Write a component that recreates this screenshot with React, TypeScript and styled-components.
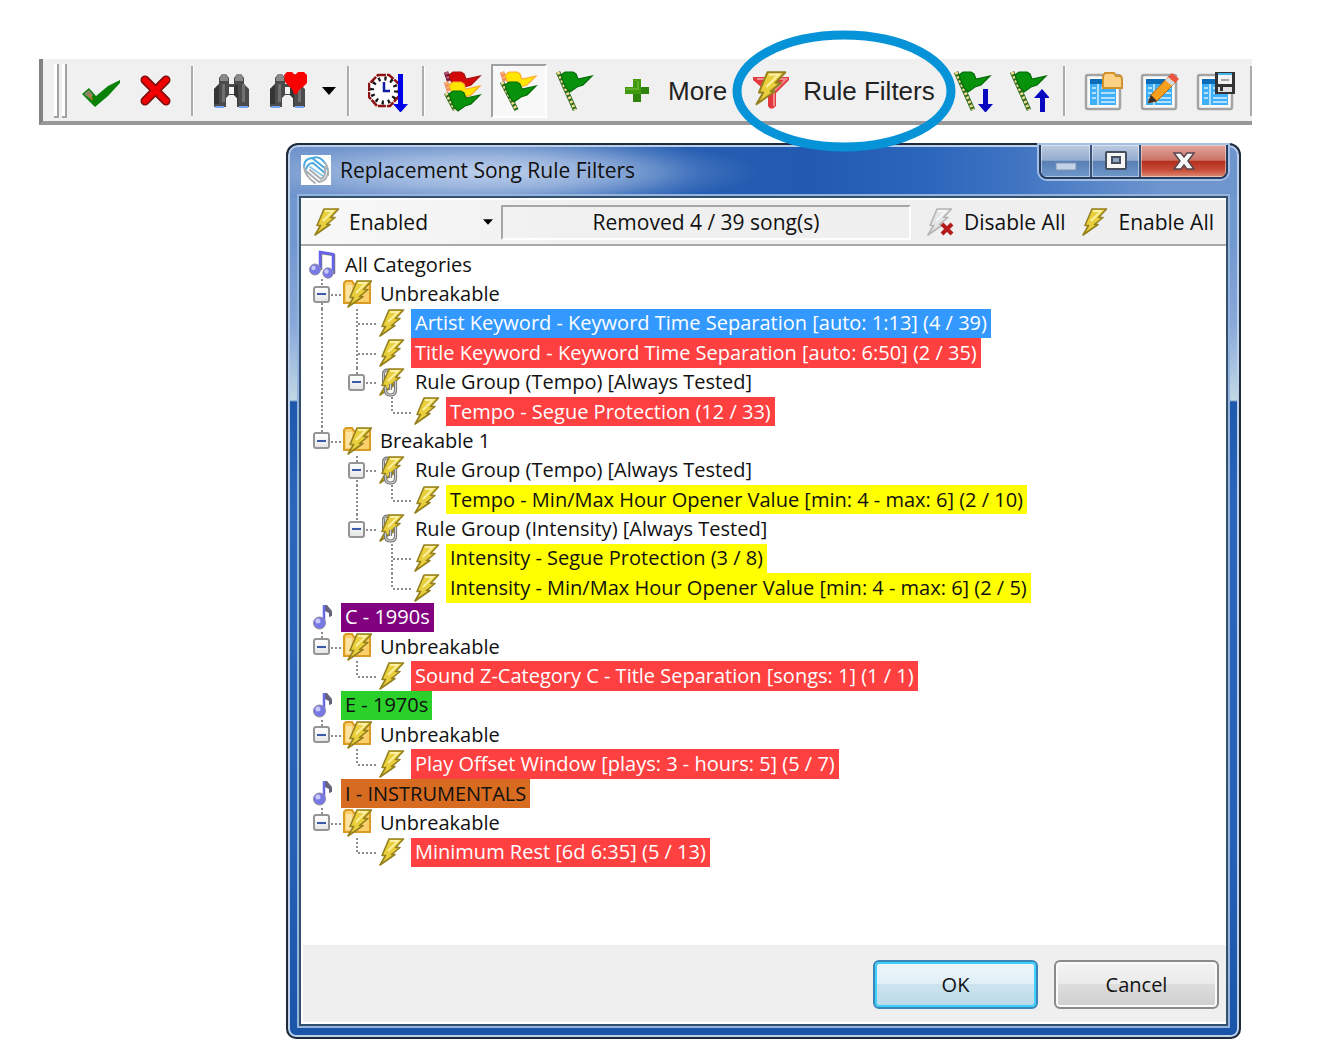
import React from "react";
import styled, { createGlobalStyle, css } from "styled-components";

const GlobalStyle = createGlobalStyle`
  *, *::before, *::after { box-sizing: border-box; }
  body { margin: 0; background: #fff; }
  button, select { font: inherit; color: inherit; margin: 0; padding: 0; border: 0; background: none; }
`;

const Page = styled.main`
  display: flex;
  flex-direction: column;
  gap: 18px;
  padding: 59px 84px 5px 39px;
  font-family: "Open Sans", "Noto Sans", sans-serif;
  font-size: 20px;
  line-height: 28px;
  color: #111;
`;

/* ---------- main toolbar ---------- */

const Toolbar = styled.div`
  display: flex;
  align-items: center;
  height: 66px;
  padding-top: 2px;
  background: #f0f0f0;
  border-left: 4px solid #838383;
  border-bottom: 4px solid #989898;
  font-family: "Liberation Sans", Arial, sans-serif;
  font-size: 26px;
  line-height: 32px;
  color: #222;
  white-space: nowrap;
`;

const Grip = styled.div`
  display: flex;
  gap: 3px;
  height: 54px;
  margin: 0 6px 0 11px;
`;

const GripBar = styled.span`
  width: 5px;
  border: solid #a2a2a2;
  border-width: 0 2px 2px 0;
  background: #fff;
`;

const ToolButton = styled.button<{ $pressed?: boolean }>`
  display: grid;
  place-items: center;
  flex: none;
  width: 56px;
  height: 54px;
  border: 2px solid transparent;
  ${(p) =>
    p.$pressed &&
    css`
      background: #f8f8f8;
      border-color: #a0a0a0 #fff #fff #a0a0a0;
    `}
`;

const CaretButton = styled.button`
  display: grid;
  place-items: center;
  flex: none;
  width: 25px;
  height: 54px;
`;

const TextButton = styled.button<{ $pad: string }>`
  position: relative;
  display: flex;
  align-items: center;
  flex: none;
  gap: 11px;
  height: 54px;
  padding: ${(p) => p.$pad};
`;

const Separator = styled.span`
  flex: none;
  width: 3px;
  height: 50px;
  margin: 0 10px 0 6px;
  border-left: 2px solid #adadad;
  border-right: 1px solid #fff;
  &:last-child {
    margin-right: 0;
  }
`;

const Highlight = styled.svg`
  position: absolute;
  left: 50%;
  top: 50%;
  transform: translate(-50%, -50%);
  z-index: 2;
  pointer-events: none;
`;

/* ---------- dialog ---------- */

const Dialog = styled.section`
  margin: 0 11px 0 247px;
  padding: 0 11px 11px;
  border: 2px solid #1f2a3c;
  border-radius: 12px 12px 10px 10px;
  box-shadow: inset 0 0 0 2px #bdd0ea;
  background:
    radial-gradient(ellipse 270px 36px at 200px 27px, rgba(205, 220, 242, 0.85), rgba(190, 208, 236, 0.6) 45%, rgba(190, 208, 236, 0.15) 80%, transparent) no-repeat 0 0 / 100% 53px,
    linear-gradient(90deg, #6d92cb, #5a84c4 25%, #265eb2 42%, #215ab0 55%, #2d67bc 68%, #3e73c1 76%, #6e95ce 92%) no-repeat 0 0 / 100% 53px,
    linear-gradient(#7298d0, #7298d0 100px, #8aa8da 180px, #c0d8e4 255px, #1d58ac 257px, #2b66bd 360px, #2560b6 700px, #1b55aa);
`;

const TitleBar = styled.header`
  display: flex;
  align-items: flex-start;
  height: 51px;
  padding-left: 2px;
`;

const Title = styled.h1`
  flex: 1;
  margin: 11px 0 0 9px;
  font-size: 21px;
  line-height: 28px;
  font-weight: 400;
`;

const Logo = styled.svg`
  margin-top: 10px;
  background: #fff;
`;

const CaptionGroup = styled.div`
  display: flex;
  height: 34px;
  border: 2px solid #243c60;
  border-top: 0;
  border-radius: 0 0 8px 8px;
  box-shadow: 0 0 0 2px #a3bfe4;
  overflow: hidden;
`;

const CaptionButton = styled.button<{ $close?: boolean }>`
  display: grid;
  place-items: center;
  width: ${(p) => (p.$close ? 87 : 49)}px;
  box-shadow: inset 0 0 0 1px rgba(255, 255, 255, 0.45);
  background: ${(p) =>
    p.$close
      ? "linear-gradient(#dfa79c, #cc7265 48%, #b42d1c 50%, #c8503c 80%, #dd8e78)"
      : "linear-gradient(#bccbe0, #94accf 48%, #587fb4 50%, #6f97ca)"};
  & + & {
    border-left: 2px solid #3b5278;
  }
`;

const Client = styled.div`
  border: 2px solid #34506f;
  box-shadow: 0 0 0 2px #94b4de;
  background: #fff;
`;

const FilterBar = styled.div`
  display: flex;
  align-items: center;
  height: 48px;
  padding: 0 12px;
  border-top: 2px solid #fff;
  border-bottom: 2px solid #a9a9a9;
  background: linear-gradient(90deg, #f8f8f8, #f0f0f0 30%, #efefef);
  font-size: 21px;
  white-space: nowrap;
`;

const ModeField = styled.label`
  display: flex;
  align-items: center;
  gap: 8px;
  width: 188px;
  padding-right: 8px;
`;

const ModeSelect = styled.select`
  flex: 1;
  min-width: 0;
  height: 28px;
  appearance: none;
`;

const Status = styled.output`
  flex: 1;
  height: 35px;
  border: 2px solid;
  border-color: #a6a6a6 #fff #fff #a6a6a6;
  line-height: 31px;
  text-align: center;
`;

const FilterAction = styled.button`
  display: flex;
  align-items: center;
  gap: 10px;
  margin-left: 15px;
`;

/* ---------- tree ---------- */

const Tree = styled.ul`
  display: grid;
  grid-auto-rows: 1fr;
  min-height: 699px;
  margin: 0;
  padding: 4px 0 78px 3px;
  list-style: none;
`;

const Row = styled.li`
  display: flex;
  align-items: stretch;
  white-space: nowrap;
`;

const dots = "#8c8c8c";

const Cell = styled.span<{ $line?: "full" | "half" | "none"; $arm?: boolean }>`
  position: relative;
  display: grid;
  place-items: center;
  flex: none;
  width: 35px;
  &::before {
    content: "";
    position: absolute;
    left: 17px;
    top: 0;
    width: 2px;
    height: ${(p) => (p.$line === "full" ? "100%" : p.$line === "half" ? "50%" : "0")};
    background: repeating-linear-gradient(${dots} 0 2px, transparent 2px 4px);
  }
  &::after {
    content: "";
    position: absolute;
    left: 19px;
    top: 50%;
    width: ${(p) => (p.$arm ? "19px" : "0")};
    height: 2px;
    background: repeating-linear-gradient(90deg, ${dots} 0 2px, transparent 2px 4px);
  }
`;

const Expander = styled.button`
  position: relative;
  z-index: 1;
  display: grid;
  place-items: center;
  width: 17px;
  height: 17px;
  border: 2px solid #959595;
  border-radius: 3px;
  background: linear-gradient(#fff, #e6e6e6);
  &::before {
    content: "";
    width: 9px;
    height: 2px;
    background: #3c5aa8;
  }
`;

const IconCell = styled.span`
  position: relative;
  z-index: 1;
  display: grid;
  place-items: center;
  flex: none;
  width: 35px;
  height: 29px;
`;

const tones = {
  plain: "background: transparent; color: #111;",
  selected: "background: #3399ff; color: #fff;",
  red: "background: #ff4040; color: #fff;",
  yellow: "background: #ffff00; color: #111;",
  purple: "background: #800080; color: #fff;",
  green: "background: #2bd02b; color: #111;",
  orange: "background: #d76b20; color: #111;",
};

const Label = styled.span<{ $tone: keyof typeof tones }>`
  display: flex;
  align-items: center;
  margin-left: 2px;
  padding: 0 4px;
  ${(p) => tones[p.$tone]}
`;

const Footer = styled.footer`
  display: flex;
  justify-content: flex-end;
  gap: 16px;
  padding: 15px 7px 13px;
  border: solid #fff;
  border-width: 0 0 2px 2px;
  background: #efefef;
`;

const DialogButton = styled.button<{ $primary?: boolean }>`
  width: 165px;
  height: 49px;
  border: 2px solid ${(p) => (p.$primary ? "#3a86b8" : "#8a8a8a")};
  border-radius: 6px;
  box-shadow: inset 0 0 0 2px ${(p) => (p.$primary ? "#3fd0fb" : "#fafafa")};
  background: ${(p) =>
    p.$primary
      ? "linear-gradient(#eef6fb, #e0eff7 48%, #cde4ef 50%, #b9d9e8)"
      : "linear-gradient(#f3f3f3, #ebebeb 48%, #dddddd 50%, #cecece)"};
`;

/* ---------- icons ---------- */

const Glyph = ({ children }: { children: React.ReactNode }) => (
  <svg width="40" height="42" viewBox="0 0 40 42" aria-hidden="true">
    {children}
  </svg>
);

const Caret = ({ size = 14 }: { size?: number }) => (
  <svg width={size} height={size / 2 + 1} viewBox="0 0 14 8" aria-hidden="true">
    <path d="M0 0H14L7 8Z" fill="#000" />
  </svg>
);

const CheckGlyph = () => (
  <Glyph>
    <path d="M1 24L8 18L15 26L27 16L39 10V13L27 26L14 37Z" fill="#0a820a" />
    <path d="M3 24L8 20L12 25L9 29Z" fill="#8a8468" />
    <path d="M7 25L10 26L11 30" stroke="#c07a30" strokeWidth="1.500" fill="none" />
  </Glyph>
);

const CrossGlyph = () => (
  <Glyph>
    <path d="M8 10L29 31M29 10L8 31" stroke="#7c0d0d" strokeWidth="9" strokeLinecap="round" />
    <path d="M8 10L29 31M29 10L8 31" stroke="#f00000" strokeWidth="6" strokeLinecap="round" />
  </Glyph>
);

const BinocularShape = () => (
  <>
    <path d="M2 19L7 14V8L10 4H14L17 8V14H22V8L25 4H29L32 8V14L37 19V37H25V28L22 25H17L14 28V37H2Z" fill="#4b4b4b" />
    <path d="M2 19L7 14V34H2ZM22 16L26 14V34L25 35V28L22 25Z" fill="#343434" />
    <path d="M10 14H13V32H10ZM30 14H33V32H30Z" fill="#707070" />
    <path d="M8 8L10 4H14L16 8V11H8ZM23 8L25 4H29L31 8V11H23Z" fill="#8a8a8a" />
    <rect x="17" y="17" width="5" height="7" fill="#f4f4f4" />
    <path d="M3 36H12V38H3ZM27 36H36V38H27Z" fill="#79a4f5" />
  </>
);

const HeartShape = () => (
  <path d="M16 5L19 2H24L27 5L30 2H36L39 5V13L35 17L31 20L29 24H26L24 19L20 15L17 12Z" fill="#fb0000" />
);

const ClockGlyph = () => (
  <Glyph>
    <path d="M10 5H21L31 14V26L22 36H9L1 27V14Z" fill="#fff" stroke="#8f1111" strokeWidth="2.500" strokeDasharray="8 1" />
    <circle cx="16" cy="20.500" r="12" fill="none" stroke="#161616" strokeWidth="4" strokeDasharray="2.300 3.980" />
    <path d="M16 12V21H22" stroke="#111ea0" strokeWidth="2.500" fill="none" />
    <path d="M30 4H35V34H40L33 42H32L25 34H30Z" fill="#0000e6" />
  </Glyph>
);

const FlagBody = ({ fill, edge, y = 0 }: { fill: string; edge: string; y?: number }) => (
  <path
    transform={`translate(0 ${y})`}
    d="M6 5L10 2H18L21 4L23 9L37 6L33 10L28 15L22 17L15 22L11 18L8 11Z"
    fill={fill}
    stroke={edge}
    strokeWidth="1.200"
  />
);

const Pole = ({ from = "3 3", to = "20 39", a = "#f2dc94", b = "#2a6a1c" }) => (
  <>
    <path d={`M${from}L${to}`} stroke={b} strokeWidth="4.500" />
    <path d={`M${from}L${to}`} stroke={a} strokeWidth="3" strokeDasharray="2.500 2" />
  </>
);

const GreenFlag = ({ y = 0 }: { y?: number }) => (
  <>
    <Pole from={`3 ${2 + y}`} to={`${20 - y / 4} 40`} />
    <FlagBody fill="#06930b" edge="#066a08" y={y} />
  </>
);

const FlagStackGlyph = () => (
  <Glyph>
    <Pole from="3 2" to="6 11" a="#b06080" b="#7c1030" />
    <FlagBody fill="#d40808" edge="#a81010" />
    <Pole from="3 12" to="6 21" a="#f7b36c" b="#ef8860" />
    <FlagBody fill="#ffe600" edge="#ffab30" y={10} />
    <Pole from="3 23" to="12 40" />
    <FlagBody fill="#06930b" edge="#066a08" y={19} />
  </Glyph>
);

const FlagPairGlyph = () => (
  <Glyph>
    <Pole from="3 2" to="6 11" a="#f7b36c" b="#ef8860" />
    <FlagBody fill="#ffe600" edge="#ffab30" />
    <GreenFlag y={10} />
  </Glyph>
);

const PlusGlyph = () => (
  <Glyph>
    <path d="M16 9H24V17H32V24H24V32H16V24H8V17H16Z" fill="#3f9a10" />
    <path d="M16 24H24V32H16ZM24 17H32V24H24Z" fill="#2f840c" />
    <path d="M17 10H20V18H9V20H22V11H17Z" fill="#5cae28" />
  </Glyph>
);

const boltPath = "M11 1H25.500L17.500 9.500H22L13.500 16.500H17L2 27L7.500 17.500H4Z";

const BoltShape = ({ muted = false }: { muted?: boolean }) => (
  <>
    <path d={boltPath} fill={muted ? "#e4e4e4" : "#e9cf3e"} stroke={muted ? "#b5b5b5" : "#94801d"} strokeWidth="1.600" strokeLinejoin="round" />
    <path d="M12 3H20L10 13" stroke={muted ? "#f6f6f6" : "#fbf0a4"} strokeWidth="1.800" fill="none" />
  </>
);

const Bolt = ({ off = false }: { off?: boolean }) => (
  <svg width="28" height="28" viewBox="0 0 28 28" aria-hidden="true">
    <BoltShape muted={off} />
    {off && <path d="M16 16L26 26M26 16L16 26" stroke="#b51c1c" strokeWidth="4" />}
  </svg>
);

const FilterGlyph = () => (
  <Glyph>
    <path d="M1 7H37V10L24 23V36L21 38.500H18L16 36V23L1 10Z" fill="#e2383f" />
    <path d="M5 9H34L22 21V36" fill="none" stroke="#f08a8d" strokeWidth="2" />
    <g transform="translate(2 1) scale(1.230)">
      <BoltShape />
    </g>
  </Glyph>
);

const FlagMoveGlyph = ({ up = false }: { up?: boolean }) => (
  <Glyph>
    <GreenFlag />
    <path d={up ? "M33 19L41 28H36V42H31V28H25Z" : "M30 19H35V34H40L33 42H32L25 34H30Z"} fill="#0808c0" />
  </Glyph>
);

const TableGlyph = ({ children }: { children: React.ReactNode }) => (
  <Glyph>
    <rect x="2" y="5" width="34" height="34" rx="2" fill="#fafafa" stroke="#a3a3a3" strokeWidth="2.500" />
    <rect x="6" y="9" width="26" height="26" fill="#3fb0f8" />
    <rect x="6" y="9" width="26" height="5" fill="#0b6db8" />
    <path d="M14 14V35M8 18H12M17 18H31M8 23H12M17 23H31M8 28H12M17 28H31M17 32H31" stroke="#d6efff" strokeWidth="1.500" />
    {children}
  </Glyph>
);

const FolderCorner = () => (
  <path d="M19 6L21 3H30L32 6H37L38 9V18H19Z" fill="#fbd184" stroke="#d3922b" strokeWidth="2" />
);

const PencilCorner = () => (
  <>
    <path d="M8 33L11 25L29 6L36 12L17 31Z" fill="#f6a01e" stroke="#a8681a" />
    <path d="M28 7L32 3L39 9L35 13Z" fill="#ee5540" />
    <path d="M25 10L28 7L35 13L32 16Z" fill="#d5d9dc" />
    <path d="M8 33L11 25L17 31Z" fill="#3b2f2a" />
  </>
);

const DiskCorner = () => (
  <>
    <rect x="19" y="2" width="20" height="22" fill="#333" />
    <rect x="22" y="3" width="14" height="2" fill="#43b6ea" />
    <rect x="22" y="5" width="14" height="9" fill="#f2f2f2" />
    <rect x="22" y="17" width="14" height="5" fill="#e1e1e1" />
    <rect x="24" y="17" width="3" height="4" fill="#333" />
    <path d="M25 10H33" stroke="#8a8a8a" strokeWidth="1.500" />
  </>
);

const FolderIcon = () => (
  <svg width="30" height="29" viewBox="0 0 30 29" aria-hidden="true">
    <path d="M2 4L4 2H10L12 5H28V24H2Z" fill="#fbcf6b" stroke="#d99b22" strokeWidth="2" />
    <path d="M4 6H10V22H4Z" fill="#fde3a0" />
    <g transform="translate(4 1)">
      <BoltShape />
    </g>
  </svg>
);

const GroupIcon = () => (
  <svg width="28" height="29" viewBox="0 0 28 29" aria-hidden="true">
    <path d="M5.500 18V6Q5.500 2 9.500 2H11" fill="none" stroke="#777" strokeWidth="3" />
    <path d="M5.500 18V6Q5.500 2 9.500 2H11" fill="none" stroke="#c5c5c5" strokeWidth="1" />
    <BoltShape />
    <path d="M17.500 13V22Q17.500 27 12.500 27T7.500 22V19M12.500 16V22" fill="none" stroke="#747474" strokeWidth="3.200" />
    <path d="M17.500 13V22Q17.500 27 12.500 27T7.500 22V19M12.500 16V22" fill="none" stroke="#cfcfcf" strokeWidth="1.200" />
  </svg>
);

const NoteIcon = () => (
  <svg width="24" height="28" viewBox="0 0 24 28" aria-hidden="true">
    <path d="M14 20V2H17L22 8V13L19 14V10L15 8" fill="#63637c" />
    <path d="M14 20V2" stroke="#6a6ae2" strokeWidth="2.500" />
    <circle cx="9.500" cy="20" r="6" fill="#7878e6" stroke="#8d8d9c" />
    <circle cx="8" cy="18" r="2.500" fill="#c8c8fb" />
  </svg>
);

const NotesIcon = () => (
  <svg width="28" height="29" viewBox="0 0 28 29" aria-hidden="true">
    <path d="M12 19V2L25 4V23" fill="none" stroke="#77778c" strokeWidth="2.500" transform="translate(1 1)" />
    <path d="M12 19V2L25 4V23" fill="none" stroke="#6363f0" strokeWidth="2.500" />
    <circle cx="7" cy="19.500" r="5.500" fill="#7878e6" stroke="#9292a2" />
    <circle cx="20" cy="23" r="5.200" fill="#7878e6" stroke="#9292a2" />
    <circle cx="5.500" cy="18" r="2.200" fill="#c8c8fb" />
    <circle cx="18.500" cy="21.500" r="2.200" fill="#c8c8fb" />
  </svg>
);

const rowIcons = { notes: NotesIcon, note: NoteIcon, folder: FolderIcon, group: GroupIcon, bolt: Bolt };

/* Guide letters, one per indent column: "|" line through, "T" branch, "L" last branch,
   "+" expander with a line below, "-" last expander, " " empty. */
type TreeRow = [guides: string, icon: keyof typeof rowIcons, text: string, tone?: keyof typeof tones];

const rows: TreeRow[] = [
  ["", "notes", "All Categories"],
  ["+", "folder", "Unbreakable"],
  ["|T", "bolt", "Artist Keyword - Keyword Time Separation [auto: 1:13] (4 / 39)", "selected"],
  ["|T", "bolt", "Title Keyword - Keyword Time Separation [auto: 6:50] (2 / 35)", "red"],
  ["|-", "group", "Rule Group (Tempo) [Always Tested]"],
  ["| L", "bolt", "Tempo - Segue Protection (12 / 33)", "red"],
  ["-", "folder", "Breakable 1"],
  [" +", "group", "Rule Group (Tempo) [Always Tested]"],
  [" |L", "bolt", "Tempo - Min/Max Hour Opener Value [min: 4 - max: 6] (2 / 10)", "yellow"],
  [" -", "group", "Rule Group (Intensity) [Always Tested]"],
  ["  T", "bolt", "Intensity - Segue Protection (3 / 8)", "yellow"],
  ["  L", "bolt", "Intensity - Min/Max Hour Opener Value [min: 4 - max: 6] (2 / 5)", "yellow"],
  ["", "note", "C - 1990s", "purple"],
  ["-", "folder", "Unbreakable"],
  [" L", "bolt", "Sound Z-Category C - Title Separation [songs: 1] (1 / 1)", "red"],
  ["", "note", "E - 1970s", "green"],
  ["-", "folder", "Unbreakable"],
  [" L", "bolt", "Play Offset Window [plays: 3 - hours: 5] (5 / 7)", "red"],
  ["", "note", "I - INSTRUMENTALS", "orange"],
  ["-", "folder", "Unbreakable"],
  [" L", "bolt", "Minimum Rest [6d 6:35] (5 / 13)", "red"],
];

const TreeItem = ({ row: [guides, icon, text, tone = "plain"] }: { row: TreeRow }) => {
  const Icon = rowIcons[icon];
  return (
    <Row role="treeitem" aria-level={guides.length + 1} aria-selected={tone === "selected"}>
      {guides.split("").map((g, i) => (
        <Cell key={i} $line={g === " " ? "none" : "|T+".includes(g) ? "full" : "half"} $arm={"TL+-".includes(g)}>
          {"+-".includes(g) && <Expander aria-label={`Collapse ${text}`} />}
        </Cell>
      ))}
      <IconCell>
        <Icon />
      </IconCell>
      <Label $tone={tone}>{text}</Label>
    </Row>
  );
};

export default function App() {
  return (
    <Page>
      <GlobalStyle />
      <Toolbar role="toolbar" aria-label="Main">
        <Grip>
          <GripBar />
          <GripBar />
        </Grip>
        <ToolButton aria-label="Accept"><CheckGlyph /></ToolButton>
        <ToolButton aria-label="Cancel changes"><CrossGlyph /></ToolButton>
        <Separator />
        <ToolButton aria-label="Find"><Glyph><BinocularShape /></Glyph></ToolButton>
        <ToolButton aria-label="Find favorites"><Glyph><BinocularShape /><HeartShape /></Glyph></ToolButton>
        <CaretButton aria-label="Find options"><Caret /></CaretButton>
        <Separator />
        <ToolButton aria-label="Sort by time"><ClockGlyph /></ToolButton>
        <Separator />
        <ToolButton aria-label="All flags"><FlagStackGlyph /></ToolButton>
        <ToolButton aria-label="Yellow and green flags" aria-pressed="true" $pressed><FlagPairGlyph /></ToolButton>
        <ToolButton aria-label="Green flags"><Glyph><GreenFlag /></Glyph></ToolButton>
        <TextButton $pad="0 17px 0 14px"><PlusGlyph />More</TextButton>
        <TextButton $pad="0 10px 0 8px">
          <FilterGlyph />
          Rule Filters
          <Highlight width="224" height="122" viewBox="0 0 224 122" aria-hidden="true">
            <ellipse cx="112" cy="61" rx="107" ry="56" fill="none" stroke="#0693d7" strokeWidth="9" />
          </Highlight>
        </TextButton>
        <ToolButton aria-label="Next flag"><FlagMoveGlyph /></ToolButton>
        <ToolButton aria-label="Previous flag"><FlagMoveGlyph up /></ToolButton>
        <Separator />
        <ToolButton aria-label="Open layout"><TableGlyph><FolderCorner /></TableGlyph></ToolButton>
        <ToolButton aria-label="Edit layout"><TableGlyph><PencilCorner /></TableGlyph></ToolButton>
        <ToolButton aria-label="Save layout"><TableGlyph><DiskCorner /></TableGlyph></ToolButton>
        <Separator />
      </Toolbar>

      <Dialog role="dialog" aria-labelledby="dialog-title">
        <TitleBar>
          <Logo width="30" height="30" viewBox="0 0 30 30" aria-hidden="true">
            <g fill="none" strokeLinecap="round">
              <path d="M3 11Q3 4 11 3L25 14M5 14Q7 8 12 8L24 18M12 3Q18 0 24 8" stroke="#49a9df" strokeWidth="2" />
              <path d="M3 12Q4 21 14 28M5 16L18 27Q26 26 27 17M9 15L20 24Q25 22 24 12M24 8Q28 13 27 20" stroke="#a9aeb3" strokeWidth="2" />
              <path d="M9 12L22 21" stroke="#8cc8ea" strokeWidth="2" />
            </g>
          </Logo>
          <Title id="dialog-title">Replacement Song Rule Filters</Title>
          <CaptionGroup>
            <CaptionButton aria-label="Minimize">
              <svg width="22" height="22" viewBox="0 0 22 22" aria-hidden="true">
                <rect x="1" y="13" width="20" height="7" fill="#c3d2e6" stroke="#7d94b5" />
              </svg>
            </CaptionButton>
            <CaptionButton aria-label="Maximize">
              <svg width="22" height="20" viewBox="0 0 22 20" aria-hidden="true">
                <rect x="1" y="1" width="20" height="17" rx="1" fill="#f5f5f5" stroke="#454f60" strokeWidth="2" />
                <rect x="7" y="6" width="8" height="6" fill="#8ea5c4" stroke="#454f60" strokeWidth="2" />
              </svg>
            </CaptionButton>
            <CaptionButton aria-label="Close" $close>
              <svg width="22" height="20" viewBox="0 0 22 20" aria-hidden="true">
                <path d="M1 2H8L11 6L14 2H21L15 10L21 18H14L11 14L8 18H1L7 10Z" fill="#f7f7f7" stroke="#5a4650" strokeWidth="1.500" />
              </svg>
            </CaptionButton>
          </CaptionGroup>
        </TitleBar>
        <Client>
          <FilterBar>
            <ModeField>
              <Bolt />
              <ModeSelect aria-label="Filter mode" defaultValue="Enabled">
                <option>Enabled</option>
                <option>Disabled</option>
              </ModeSelect>
              <Caret size={10} />
            </ModeField>
            <Status>Removed 4 / 39 song(s)</Status>
            <FilterAction><Bolt off />Disable All</FilterAction>
            <FilterAction><Bolt />Enable All</FilterAction>
          </FilterBar>
          <Tree role="tree" aria-label="Rule filters">
            {rows.map((row, i) => (
              <TreeItem key={i} row={row} />
            ))}
          </Tree>
          <Footer>
            <DialogButton $primary>OK</DialogButton>
            <DialogButton>Cancel</DialogButton>
          </Footer>
        </Client>
      </Dialog>
    </Page>
  );
}
